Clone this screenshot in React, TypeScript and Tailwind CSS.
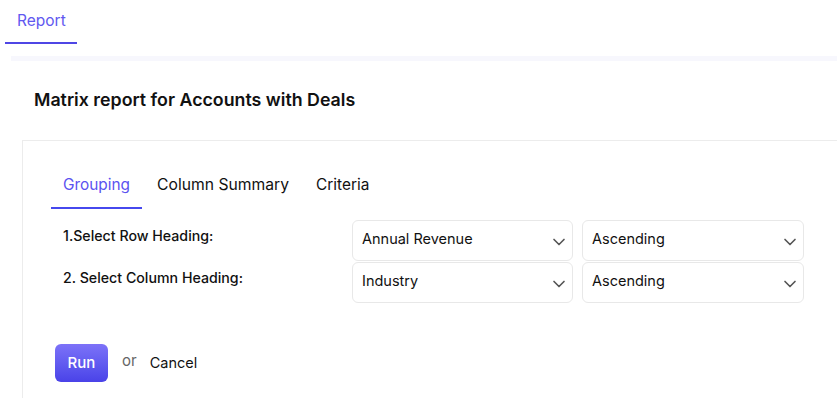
import { ChevronDown } from "lucide-react"

const rows = [
  { label: "1.Select Row Heading:", field: "Annual Revenue", order: "Ascending" },
  { label: "2. Select Column Heading:", field: "Industry", order: "Ascending" },
]

function SelectBox({ value, className = "" }: { value: string; className?: string }) {
  return (
    <div
      className={`flex h-[41px] items-center justify-between rounded-md border border-[#e8e8e8] bg-white pl-[9px] pr-[3px] text-[14.5px] text-[#111] ${className}`}
    >
      <span className="-mt-[4px]">{value}</span>
      <ChevronDown className="mt-[2px] h-[20px] w-[20px] text-[#555]" strokeWidth={2} />
    </div>
  )
}

export default function App() {
  return (
    <div className="min-h-screen bg-white font-['Inter',sans-serif] text-[#111]">
      {/* Top tab */}
      <div className="flex pl-[5px]">
        <div className="border-b-2 border-[#4f46e5] pl-3 pr-[11px] pt-[10px] pb-[10px] text-[15.5px] leading-[22px] text-[#6158f0]">Report</div>
      </div>
      <div className="ml-[11px] mt-[12px] h-[5px] bg-[#f7f7fd]" />

      {/* Heading */}
      <div className="pl-[34px] pt-[28px] pb-[28px]">
        <h1 className="text-[17.8px] font-semibold leading-[22px] text-[#111]">Matrix report for Accounts with Deals</h1>
      </div>

      {/* Panel */}
      <div className="ml-[22px] mt-[1px] border-l border-t border-[#ececec] bg-white pl-[28px] pt-[33px]">
        <div className="flex gap-[3px]">
          <div className="border-b-2 border-[#4648ee] px-3 pb-[11px] text-[15.4px] leading-[22px] text-[#5b52f0]">Grouping</div>
          <div className="px-3 pb-[11px] text-[15.7px] leading-[22px]">Column Summary</div>
          <div className="pl-[12px] pb-[11px] text-[15.4px] leading-[22px]">Criteria</div>
        </div>

        <div className="mt-[11px] flex flex-col gap-[1px]">
          {rows.map((r) => (
            <div key={r.label} className="flex items-start">
              <div className="w-[301px] pl-3 pt-[6px] text-[14.2px] font-medium leading-[20px]">{r.label}</div>
              <SelectBox value={r.field} className="w-[221px]" />
              <SelectBox value={r.order} className="ml-[9px] w-[222px]" />
            </div>
          ))}
        </div>

        <div className="mt-[41px] flex items-center pl-[4px] pb-[20px]">
          <button className="h-[38px] w-[53px] rounded-md bg-gradient-to-b from-[#7d72f8] to-[#4a42e8] text-[15px] font-medium text-white">
            Run
          </button>
          <span className="ml-[14px] -mt-[4px] text-[15px] text-[#666]">or</span>
          <span className="ml-[13px] text-[14.5px] text-[#111]">Cancel</span>
        </div>
      </div>
    </div>
  )
}
